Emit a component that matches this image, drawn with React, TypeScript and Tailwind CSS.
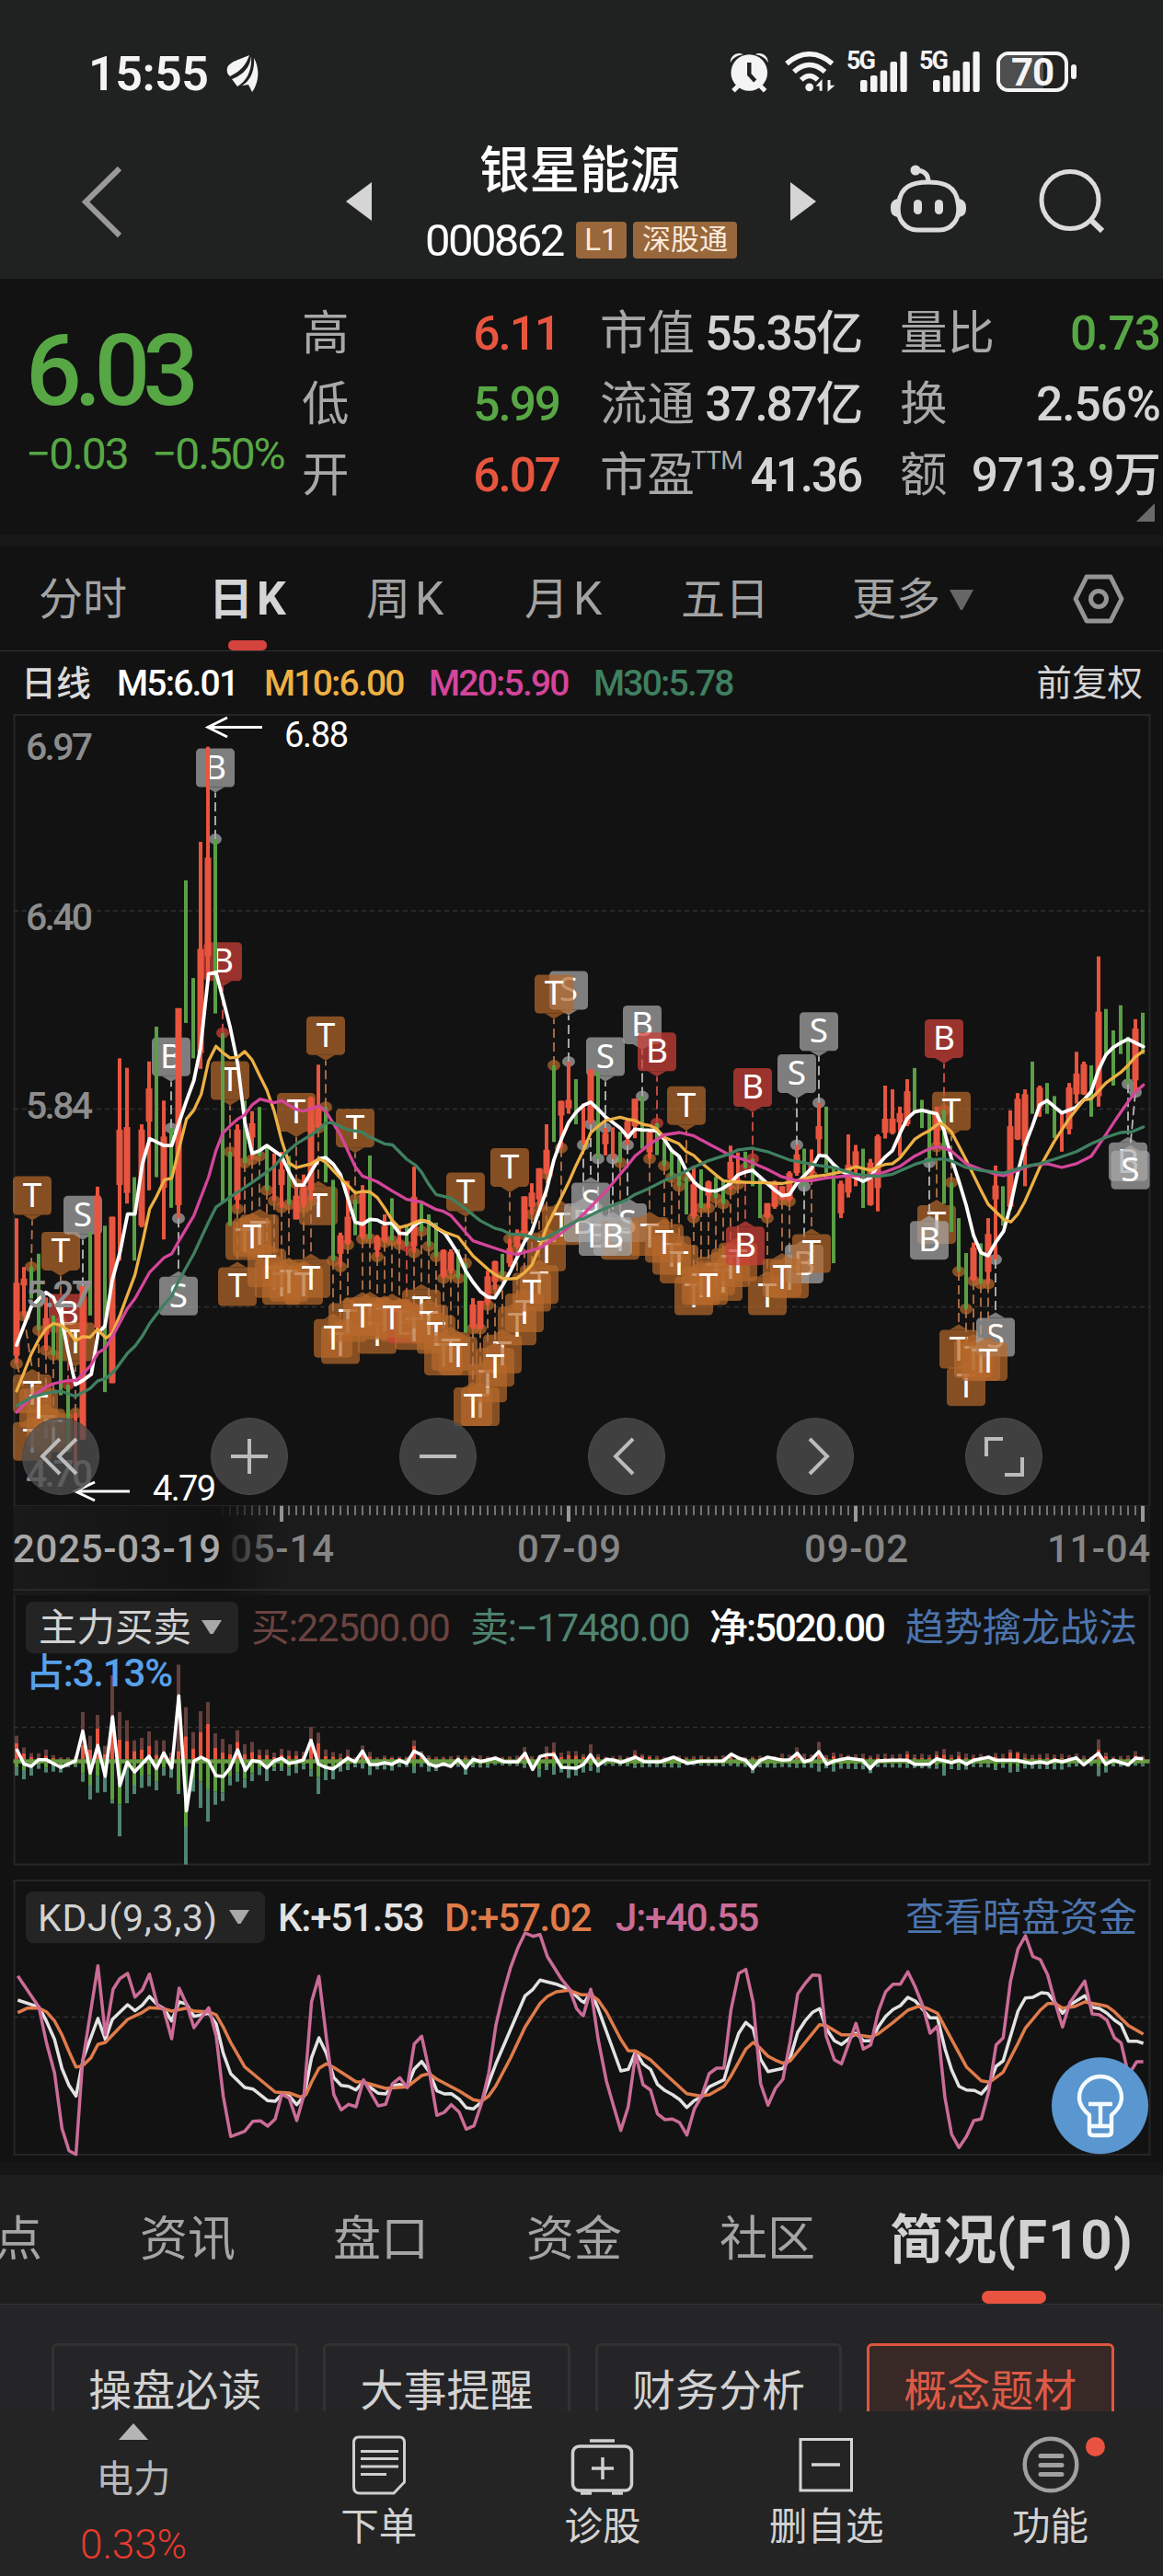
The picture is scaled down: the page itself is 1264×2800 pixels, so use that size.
import React from "react";

/* ---------- chart data ---------- */

type Section = { x0: number; sx: number; y0: number; sy: number };

const LEFT: Section = { x0: 0, sx: 3, y0: 760, sy: 1.742 };
const MID: Section = { x0: 400, sx: 3, y0: 1020, sy: 2.45 };
const RIGHT: Section = { x0: 820, sx: 3, y0: 1020, sy: 2.45 };
const FLOW_A: Section = { x0: 0, sx: 3, y0: 1720, sy: 3 };
const FLOW_B: Section = { x0: 0, sx: 1.2405, y0: 1620, sy: 3 };
const KDJ_A: Section = { x0: 0, sx: 2.481, y0: 2030, sy: 3 };
const KDJ_B: Section = { x0: 632, sx: 2.481, y0: 2030, sy: 3 };

function points(parts: [Section, string][]): string {
  return parts
    .map(([s, str]) =>
      str
        .trim()
        .split(/\s+/)
        .map((p) => {
          const [x, y] = p.split(",").map(Number);
          return `${(s.x0 + x / s.sx).toFixed(1)},${(s.y0 + y / s.sy).toFixed(1)}`;
        })
        .join(" ")
    )
    .join(" ");
}

const xAt = (i: number) => 18 + 8 * i;

/* kind high low [bodyTop bodyBottom] */
const CANDLES_LEFT = `r 983 1258 1105 1243;r 1075 1168 1097 1110;g 1075 1135;g 1050 1195;r 1133 1233 1172 1203;g 1167 1242;g 1180 1318;g 1298 1425;r 1352 1460;r 1112 1402 1112 1402;g 1010 1167;r 923 1193 940 1190;g 997 1312;r 980 1295 980 1295;r 680 1063 815 920;r 698 955 810 935;g 905 1063;r 805 1000 815 997;r 686 930 737 800;g 620 905;r 760 1023 828 925;g 812 963;r 585 983 585 958;g 343 613;g 528 680;r 270 700 473 670;r 90 525 300 487;g 265 595;g 632 953;g 857 997;r 805 965 815 948;g 760 878;r 780 872 803 830;g 772 865;g 850 930;r 860 950;r 857 963 890 920;g 865 957;r 917 985 940 985;r 900 963 920 955;r 752 950 755 930;r 692 812 770 810;g 772 915;g 910 1063;r 1010 1075 1015 1050;r 912 1033 980 1030;g 947 1015;r 920 1022 935 1018`;
const CANDLES_MID = `g 578 800;r 790 848 795 830;r 735 810 765 805;g 692 805;r 765 815;g 765 820;r 608 837 688 820;g 700 780;g 735 820;g 757 848;r 828 905 830 900;r 828 893 835 885;g 828 905;g 865 1050;r 958 1040 975 1035;r 965 1040 965 1040;r 885 977 900 970;r 858 935 860 915;g 840 900;r 800 875 825 865;r 775 825 793 820;r 687 790 687 785;r 652 735 677 715;r 612 715 612 695;r 495 628 563 625;g 338 542;r 432 558 433 472;r 328 467 430 452;g 375 495;r 440 550;r 347 495 350 490;g 355 587;r 505 578 520 548;r 503 587;g 515 597;r 483 550 487 530;r 427 532 427 500;g 420 560;r 512 587 517 570;g 492 577;g 540 605;g 560 637;g 580 660;g 635 735;r 605 745 655 740;g 615 718;r 645 718 648 685;g 635 692;g 645 707;r 552 670 595 640;r 570 655;g 568 612;g 587 660`;
const CANDLES_RIGHT = `g 640 745;r 705 745 705 742;r 645 720 650 715;r 660 697 660 695;r 620 700 625 695;r 550 632 575 625;g 560 660;r 562 632 597 625;r 438 577 500 535;g 448 625;g 600 865;r 645 745 653 732;r 522 690 603 677;r 550 660 567 610;g 560 718;r 587 712 597 710;r 522 727 527 665;r 392 533 480 518;r 402 522 480 518;r 448 580 465 490;r 375 500 407 495;g 345 460;g 430 505;g 465 597;r 448 555 467 550;g 457 707;g 650 782;g 745 887;g 838 987;r 810 912 823 910;g 812 920;r 745 920 787 888;r 605 855 658 695;g 660 765;r 458 722 500 715;r 412 537 427 535;r 402 660 415 553;g 328 467;r 392 475 397 450;g 385 467;g 420 532;r 465 568;r 385 522 397 508;r 302 440 360 415;r 328 417 335 415;g 338 475;r 48 448 195 420;g 188 312;g 245 392;g 178 308;g 262 388;r 215 410 240 378;g 198 308`;

type Candle = { i: number; up: boolean; high: number; low: number; top?: number; bottom?: number };

function parseCandles(src: string, start: number, s: Section): Candle[] {
  return src.split(";").map((row, k) => {
    const f = row.split(" ");
    const v = f.slice(1).map((n) => s.y0 + Number(n) / s.sy);
    return { i: start + k, up: f[0] === "r", high: v[0], low: v[1], top: v[2], bottom: v[3] };
  });
}

const CANDLES = [
  ...parseCandles(CANDLES_LEFT, 0, LEFT),
  ...parseCandles(CANDLES_MID, 48, MID),
  ...parseCandles(CANDLES_RIGHT, 101, RIGHT),
];

const MA5 = points([
  [LEFT, "54,1223 102,1150 150,1123 174,1133 198,1165 222,1235 246,1298 270,1290 298,1278 320,1200 342,1187 366,1100 392,1045 416,975 440,975 464,880 488,832 510,838 534,845 560,845 582,805 608,760 632,722 654,660 680,520 704,517 728,570 750,620 775,690 798,800 822,860 846,855 870,845 918,865 942,895 966,920 990,920 1014,895 1040,870 1062,868 1086,880 1110,900 1134,945 1158,990 1182,994"],
  [MID, "6,748 30,750 54,760 78,758 102,785 126,787 150,765 174,752 198,755 222,770 250,785 272,812 294,840 318,885 342,915 366,940 390,955 414,957 438,925 462,890 486,850 510,808 534,780 558,725 582,670 606,590 630,535 654,490 678,463 702,445 726,436 750,455 774,475 798,490 822,505 848,530 870,508 894,510 942,512 966,535 990,565 1014,580 1038,620 1062,648 1086,665 1110,672 1134,673 1158,665 1182,652 1206,630 1230,622 1254,618"],
  [RIGHT, "18,635 42,653 66,670 90,685 114,682 138,652 162,632 186,612 210,578 234,580 258,602 282,620 330,637 354,647 378,637 402,605 426,582 450,565 474,520 498,480 522,462 546,458 594,467 618,510 642,585 666,645 690,710 714,790 738,837 762,845 786,810 812,780 834,715 858,625 882,550 906,500 930,443 954,432 1002,465 1026,457 1048,450 1074,430 1098,408 1122,350 1146,310 1170,290 1194,278 1218,268 1242,278 1268,288"],
]);
const MA10 = points([
  [LEFT, "54,1310 102,1240 126,1213 150,1192 174,1182 198,1185 222,1195 246,1215 270,1207 294,1208 318,1193 346,1210 366,1200 392,1165 416,1127 440,1090 464,1030 488,965 510,942 536,910 560,907 584,850 608,795 632,778 656,748 680,685 704,657 728,670 750,679 775,678 798,667 822,683 846,712 870,740 894,780 918,835 942,878 966,887 1014,880 1040,870 1062,877 1086,892 1110,907 1134,920 1158,935 1182,932"],
  [MID, "6,675 30,690 54,718 78,750 102,770 126,765 174,750 198,755 222,770 250,782 294,795 318,820 342,845 390,880 414,895 438,905 462,907 486,905 510,890 534,870 558,825 582,770 606,730 654,650 678,605 702,565 726,518 750,500 774,485 822,476 846,482 870,485 894,495 918,498 942,508 966,530 1014,547 1038,568 1062,578 1086,597 1110,613 1134,630 1158,645 1182,648 1254,650"],
  [RIGHT, "18,650 90,653 138,645 186,635 234,630 282,622 330,608 380,618 402,608 426,602 450,600 474,585 522,535 546,522 570,512 602,492 618,497 642,515 690,590 738,670 762,708 812,748 836,755 858,735 882,700 930,610 978,540 1026,480 1074,430 1098,427 1146,385 1194,357 1218,338 1242,315 1268,300"],
]);
const MA20 = points([
  [LEFT, "54,1350 102,1322 150,1302 174,1296 222,1290 250,1290 270,1277 294,1263 320,1237 342,1230 366,1207 416,1153 440,1135 488,1085 534,1058 560,1050 584,1025 632,978 680,905 704,855 726,822 750,808 775,795 798,787 822,768 848,757 894,764 918,760 966,777 990,780 1040,770 1062,780 1110,825 1158,885 1182,903"],
  [MID, "6,640 30,648 78,672 126,695 174,702 222,722 246,727 270,738 342,805 366,812 414,825 462,838 486,842 558,825 606,800 666,762 702,735 750,695 774,675 846,605 870,580 918,548 966,523 1016,517 1060,525 1110,547 1182,578 1254,597"],
  [RIGHT, "0,600 42,615 90,635 138,645 186,645 234,638 306,632 378,632 426,622 474,607 522,580 570,560 602,555 640,565 690,600 738,615 786,628 812,632 850,620 900,605 954,600 1002,610 1050,600 1098,580 1146,522 1170,492 1194,463 1218,435 1242,410 1268,390"],
]);
const MA30 = points([
  [LEFT, "54,1338 102,1322 150,1314 198,1310 246,1320 294,1305 318,1291 346,1286 376,1270 416,1238 440,1225 464,1206 488,1182 534,1147 560,1130 584,1100 632,1050 680,990 704,962 750,943 822,915 894,885 930,860 966,842 1014,825 1040,815 1062,802 1086,802 1134,815 1182,820"],
  [MID, "0,527 54,547 80,550 126,588 156,605 174,622 198,655 222,682 270,692 318,720 366,752 414,772 438,777 462,787 510,790 560,802 582,797 630,775 690,748 702,747 750,727 846,695 870,682 918,665 966,645 1016,628 1060,610 1110,592 1182,573 1206,563 1254,558"],
  [RIGHT, "0,560 42,568 114,590 210,605 258,610 330,628 402,634 450,628 522,602 570,590 618,587 650,595 690,610 738,618 812,625 880,608 930,600 978,588 1050,568 1098,547 1146,530 1194,517 1230,515 1268,502"],
]);

/* ---------- trade markers ---------- */

type Marker = { i: number; letter: "T" | "B" | "S"; tone: "t" | "r" | "g"; above: boolean };

const mk = (letter: Marker["letter"], tone: Marker["tone"], above: boolean, list: number[]): Marker[] =>
  list.map((i) => ({ i, letter, tone, above }));

const FRONT = [3, 32, 34, 40, 43, 47, 51, 60, 62, 65, 69, 70, 73, 81, 88, 94, 99, 102, 104, 108, 124, 132, 152];

const MARKERS: Marker[] = [
  ...mk("T", "t", true, [2, 6, 8, 29, 38, 42, 46, 61, 67, 73, 91, 127]),
  ...mk("T", "t", false, [
    0, 1, 3, 4, 5, 30, 31, 32, 33, 34, 35, 36, 37, 39, 40, 41, 43, 44, 45, 47, 48, 49, 50, 51, 52, 54, 55, 56, 57, 58, 59,
    60, 62, 63, 64, 65, 66, 68, 69, 70, 71, 72, 74, 82, 86, 88, 89, 90, 92, 93, 94, 95, 96, 97, 98, 102, 104, 105, 108, 125,
    128, 129, 130, 131, 132,
  ]),
  ...mk("B", "r", true, [7, 28, 87, 100, 126]),
  ...mk("B", "r", false, [53, 99]),
  ...mk("B", "g", true, [21, 27, 85]),
  ...mk("B", "g", false, [77, 79, 81, 107, 124, 151]),
  ...mk("S", "g", true, [9, 75, 80, 106, 109]),
  ...mk("S", "g", false, [22, 78, 83, 133, 152]),
].sort((a, b) => Number(FRONT.includes(a.i)) - Number(FRONT.includes(b.i)) || a.i - b.i);

const TONES = {
  t: { fill: "#b7692b", dash: "#b5734a", op: 0.7 },
  r: { fill: "#c83f37", dash: "#d0504a", op: 0.75 },
  g: { fill: "#a8a8a8", dash: "#b8b8b8", op: 0.72 },
};

function MarkerTag({ m }: { m: Marker }) {
  const c = CANDLES[m.i];
  const x = xAt(m.i);
  const tx = Math.max(35, Math.min(x, m.i === 152 ? 1228.5 : 1226));
  const y = m.above ? c.high : c.low;
  const top = m.above ? y - 98.5 : y + 63.5;
  const t = TONES[m.tone];
  const tip = m.above ? top + 48 : top - 6;
  const edge = m.above ? top + 42 : top;
  return (
    <g>
      <line x1={x} y1={y} x2={tx} y2={tip} stroke={t.dash} strokeWidth="1.8" strokeDasharray="10 5" />
      <ellipse cx={x} cy={y} rx="7" ry="6" fill={t.fill} opacity={t.op} />
      <g opacity={t.op}>
        <rect x={tx - 21} y={top} width="42" height="42" rx="4.5" fill={t.fill} />
        <path d={`M${tx - 10} ${edge}L${tx} ${tip}L${tx + 10} ${edge}Z`} fill={t.fill} />
      </g>
      <text x={tx} y={top + 33} fontSize="37" fill="#fff" textAnchor="middle" fontFamily='"Noto Sans", sans-serif'>
        {m.letter}
      </text>
    </g>
  );
}

/* ---------- fund flow data: outer top, inner top, inner bottom, outer bottom ---------- */

const FLOW_HEAD = `500 525 605 630;538 558 612 642;557 570 605 630;557 572 595 608;545 565 605 620;563 572 600 617;570 575 603 620;570 575 595 603;568 574 595 602;423 530 622 650;500 545 660 708;432 477 632 686;533 560 632 684;303 440 710 721;422 513 725 828;450 517 608 720;515 550 660 690;507 545 630 670;486 533 628 665;515 562 650 678;515 560 605 630;555 570 605 637;268 550 678 690;407 502 795 920;488 542 640 682;420 488 650 735;390 462 672 780;492 540 682 725;510 555 685 713;528 560 635 662;482 520 620 650;528 560 640 670;520 553 622 648;545 563 605 628;545 563 610 648;555 570 605 615;543 562 600 615;548 565 605 630;550 565 600 622;552 568 595 610;471 510 610 633;490 525 635 690;545 567 610 645;553 568 605 642;558 572 600 617;545 565 595 612;570 575 593 603;532 548 590 607;553 568 600 628;570 575 598 610;565 573 595 610;568 573 600 614;568 573 592 602;568 573 590 602;515 533 600 622;550 568 590 602;565 573 600 617;568 574 600 615`;

const FLOW_PEAKS: Record<number, number[]> = {
  61: [566, 573, 605, 627], 69: [537, 558, 595, 605], 71: [565, 572, 610, 635], 72: [535, 560, 600, 612], 73: [522, 552, 600, 627],
  74: [555, 570, 600, 620], 75: [550, 563, 610, 638], 76: [550, 565, 605, 630], 77: [560, 570, 600, 620], 78: [528, 560, 598, 615],
  79: [560, 570, 600, 620], 84: [547, 560, 595, 605], 85: [560, 567, 595, 603], 86: [564, 570, 590, 602], 97: [560, 568, 590, 598],
  100: [568, 573, 605, 622], 106: [538, 558, 595, 605], 109: [520, 553, 595, 617], 111: [555, 567, 598, 617], 116: [565, 572, 605, 622],
  121: [550, 560, 595, 605], 125: [550, 562, 598, 608], 126: [543, 562, 600, 630], 128: [552, 565, 600, 612], 133: [556, 568, 600, 612],
  135: [545, 555, 600, 620], 136: [552, 556, 600, 618], 144: [558, 570, 590, 600], 147: [512, 545, 600, 632], 148: [555, 567, 602, 620],
  152: [550, 565, 590, 598], 153: [565, 572, 592, 600],
};

const FLOW_BARS: number[][] = [
  ...FLOW_HEAD.split(";").map((r) => r.split(" ").map(Number)),
  ...Array.from({ length: 96 }, (_, k) => {
    const i = k + 58;
    if (FLOW_PEAKS[i]) return FLOW_PEAKS[i];
    const active = i > 103 && i < 145 ? 6 : 0;
    const a = (i * 37) % 11;
    const b = (i * 53) % 13;
    return [569 - a * 0.5 - active, 574 - active / 3, 592 + b * 0.3, 596 + b * 0.7 + active];
  }),
];

const FLOW_NET = points([
  [FLOW_A, "54,543 78,592 102,600 126,578 150,578 198,603 246,582 270,485 294,622 319,532 343,632 367,438 391,662 415,586 439,618 486,567 510,607 534,556 560,605 583,370 608,745 632,582 656,570 680,583 704,630 728,633 750,605 775,546 800,613 822,581 846,584 870,605 894,582 918,573 942,590 966,586 990,578 1014,515 1038,592 1062,603 1086,608 1134,573 1158,585 1182,550 1206,594 1230,594 1254,588 1278,593 1302,580 1326,590 1350,550 1374,562 1398,592 1422,600 1446,592 1470,600 1494,577"],
  [FLOW_B, "628,905 638,877 648,884 668,873 680,885 698,885 708,857 718,910 728,868 738,862 747,862 757,903 777,906 787,893 796,862 806,897 818,877 828,880 837,887 857,870 868,884 890,885 908,870 927,890 945,883 975,882 986,860 995,872 1005,880 1015,907 1025,880 1035,870 1055,880 1065,878 1075,857 1084,885 1094,878 1104,852 1115,893 1125,882 1143,873 1163,880 1173,907 1183,882 1203,880 1223,880 1233,893 1253,893 1263,875 1283,888 1293,880 1303,893 1313,880 1333,870 1343,880 1370,880 1390,890 1402,885 1412,890 1422,880 1432,885 1451,872 1461,895 1481,857 1491,893 1501,880 1521,895 1531,873 1541,875"],
]);

/* ---------- KDJ data ---------- */

const J_LINE = points([
  [KDJ_A, "48,353 105,455 125,570 147,670 167,850 186,923 205,935 222,640 264,320 284,545 305,397 323,362 344,345 364,422 384,398 403,347 424,447 442,465 463,558 483,393 503,445 523,522 563,457 583,550 602,745 622,877 660,860 682,827 702,826 722,843 742,820 760,738 780,752 800,825 820,740 840,437 860,355 880,555 900,740 920,790 940,772 960,780 980,692 1000,735 1020,777 1040,772 1058,705 1078,685 1098,718 1117,575 1137,550 1157,660 1178,808 1198,798 1217,773 1238,797 1257,853 1278,842 1298,770 1318,670 1337,515 1357,410 1377,325 1397,260 1416,213 1437,224 1456,218 1476,290 1515,365 1535,395 1555,460"],
  [KDJ_B, "0,478 5,483 25,397 45,560 67,695 87,780 106,857 126,780 146,608 166,708 186,725 205,803 225,822 245,820 265,832 284,872 304,788 324,745 344,672 364,654 384,654 403,465 424,345 443,332 463,440 483,705 503,775 523,720 543,690 563,565 583,412 603,378 623,350 642,352 660,550 682,627 701,640 740,508 760,592 780,578 800,470 820,405 840,380 860,380 880,340 900,390 920,450 940,540 960,517 980,750 998,870 1018,913 1038,877 1058,825 1078,820 1098,730 1118,578 1137,555 1157,370 1177,265 1197,222 1217,290 1237,300 1257,350 1277,440 1297,520 1317,440 1357,370 1377,477 1397,480 1417,498 1437,555 1455,572 1475,677 1497,633 1515,633"],
]);
const K_LINE = points([
  [KDJ_A, "48,432 105,455 125,500 147,560 167,655 186,710 205,745 225,620 264,492 284,560 303,495 344,447 364,467 384,448 403,420 424,447 442,460 463,500 483,438 503,445 523,485 563,475 583,510 602,605 622,672 660,717 682,722 722,760 742,762 760,740 780,745 800,773 820,745 840,620 860,555 880,605 900,685 920,710 940,713 960,725 980,697 1000,718 1020,736 1040,738 1058,712 1078,707 1098,715 1117,657 1137,632 1157,665 1178,728 1198,738 1217,737 1238,755 1257,783 1276,787 1298,765 1337,640 1416,418 1437,397 1456,367 1500,380 1535,397"],
  [KDJ_B, "0,435 8,440 25,405 45,460 106,663 126,658 146,600 166,640 186,658 205,707 225,727 245,740 265,757 284,782 304,760 324,748 344,715 384,692 403,615 424,540 443,505 463,525 483,625 503,665 543,655 563,620 583,537 603,500 623,472 642,460 660,525 682,565 701,577 740,540 760,565 780,565 800,520 820,485 840,463 860,450 880,423 900,435 940,490 960,490 980,590 998,660 1018,713 1038,725 1060,727 1078,738 1098,710 1118,648 1137,630 1177,468 1197,425 1217,423 1240,408 1257,410 1277,440 1297,475 1317,448 1357,418 1377,455 1397,460 1417,475 1437,497 1455,512 1475,566 1497,566 1515,573"],
]);
const D_LINE = points([
  [KDJ_A, "48,473 75,458 105,458 125,470 147,500 167,545 186,600 205,650 222,647 245,620 264,577 284,570 344,495 384,472 403,457 442,460 463,468 503,458 523,468 563,470 583,480 602,520 622,570 660,650 700,690 742,732 780,735 810,748 825,740 840,700 860,655 880,640 900,652 960,698 980,700 1040,720 1098,715 1137,678 1157,672 1178,690 1238,728 1276,757 1298,762 1318,745 1337,712 1377,620 1416,520 1456,443 1476,420 1500,405 1535,400"],
  [KDJ_B, "0,415 25,415 45,432 67,470 106,560 126,597 146,598 186,627 225,672 284,737 320,745 345,740 384,713 403,680 443,592 463,570 483,590 503,615 523,628 543,638 563,630 600,575 642,512 660,515 701,545 740,545 780,552 800,542 840,505 880,465 910,452 930,458 960,475 980,520 1038,650 1078,695 1100,700 1137,667 1177,573 1197,523 1237,465 1257,443 1277,443 1297,458 1330,453 1357,438 1397,447 1417,452 1437,470 1475,515 1515,543"],
]);

/* ---------- header ---------- */

function Signal() {
  return (
    <div className="relative h-[44px] w-[66px]">
      <span className="absolute left-0 top-0 text-[27px] font-bold leading-[21px] tracking-[-2px]">5G</span>
      <svg className="absolute inset-0" width="66" height="44" fill="#f4f4f4">
        <rect x="15" y="31" width="7.5" height="13" rx="2" />
        <rect x="26" y="26" width="7.5" height="18" rx="2" />
        <rect x="36.7" y="20.5" width="7.5" height="23.5" rx="2" />
        <rect x="47.5" y="11" width="7.5" height="33" rx="2" />
        <rect x="58.5" y="0" width="7.2" height="44" rx="2" />
      </svg>
    </div>
  );
}

function StatusBar() {
  return (
    <div className="flex h-[157px] items-start pl-[96px] pt-[56px] text-[#f4f4f4]">
      <div className="w-[150px] text-[52px] font-semibold leading-[50px] tracking-[-0.5px]">15:55</div>
      <svg className="mt-[3px]" width="36" height="42" viewBox="0 0 36 42" fill="#f4f4f4">
        <path d="M25 1C15 5 2 9 1 15C0 20 2 22 4 24C12 20 21 14 25 1Z" />
        <path d="M27 2C26 15 17 23 6 27L12 35C23 28 28 17 27 2Z" />
        <path d="M30 4C31 18 26 29 17 34L24 33L28 41C35 32 37 16 30 4Z" />
      </svg>
      <div className="ml-[511px] flex h-[44px] w-[377px] items-start">
        <svg width="44" height="45" viewBox="0 0 44 45">
          <circle cx="21.5" cy="23" r="20" fill="#f4f4f4" />
          <path d="M9 38L4 43M34 38L39 43" stroke="#f4f4f4" strokeWidth="5" />
          <path d="M1 12C0 5 8 -1 15 3C8 4 3 7 1 12ZM42 12C43 5 35 -1 28 3C35 4 40 7 42 12Z" fill="#f4f4f4" />
          <path d="M21.5 12V25L28 32" fill="none" stroke="#202221" strokeWidth="4.5" />
        </svg>
        <svg className="ml-[16px]" width="56" height="45" viewBox="0 0 56 45">
          <path d="M2 13C18 -1 36 -1 52 13M10 22C21 12 33 12 44 22M18 31C24 25 30 25 36 31" fill="none" stroke="#f4f4f4" strokeWidth="5.5" />
          <circle cx="27" cy="39" r="4.5" fill="#f4f4f4" />
          <path d="M34 38L41 30V43H38V38ZM55 37L47 44V31H50V37Z" fill="#f4f4f4" />
        </svg>
        <div className="ml-[12px]"><Signal /></div>
        <div className="ml-[13px]"><Signal /></div>
        <div className="ml-[18px] flex items-center">
          <div className="relative h-[44px] w-[78px] rounded-[13px] border-4 border-[#f4f4f4]">
            <div className="absolute inset-y-0 left-0 w-[47px] rounded-l-[9px] bg-[#4d4e4d]" />
            <div className="relative text-center text-[42px] font-bold leading-[38px] tracking-[-1px]">70</div>
          </div>
          <div className="ml-[3px] h-[16px] w-[6px] rounded-[3px] bg-[#f4f4f4]" />
        </div>
      </div>
    </div>
  );
}

function TitleBar() {
  return (
    <div className="flex h-[146px] items-start">
      <svg className="ml-[88px] mt-[24px]" width="46" height="78" fill="none" stroke="#999" strokeWidth="6">
        <path d="M42 2L5 38.5L42 75" />
      </svg>
      <svg className="ml-[242px] mt-[41px]" width="29" height="42" fill="#d5d5d5"><path d="M28 0V42L0 21Z" /></svg>
      <div className="ml-[57px] flex w-[340px] flex-col">
        <div className="ml-[59px] mt-[-2px] whitespace-nowrap text-[54.5px] font-medium leading-[60px] text-white">银星能源</div>
        <div className="mt-[25px] flex h-[42px] items-center">
          <span className="mt-[2px] w-[164px] text-[49px] leading-[42px] tracking-[-2.6px] text-white">000862</span>
          <span className="flex h-[40px] w-[55px] items-center justify-center rounded-[4px] bg-[#99673c] text-[33px] text-[#fbead8]">L1</span>
          <span className="ml-[7px] flex h-[40px] w-[113px] items-center justify-center rounded-[4px] bg-[#99673c] text-[31px] leading-[36px] text-[#fbead8]">
            深股通
          </span>
        </div>
      </div>
      <svg className="ml-[57px] mt-[41px]" width="29" height="42" fill="#d5d5d5"><path d="M0 0V42L28 21Z" /></svg>
      <svg className="ml-[79px] mt-[22px]" width="84" height="76" viewBox="0 0 84 76" fill="none" stroke="#dcdcdc" strokeWidth="5">
        <path d="M42 19C60 19 72 24 74 41C78 60 66 71 54 71H30C18 71 6 60 10 41C12 24 24 19 42 19Z" />
        <path d="M42 19C42 10 37 6 28 6" />
        <circle cx="28" cy="6" r="5.5" fill="#dcdcdc" stroke="none" />
        <path d="M8 37C3 39 1 41 1 47C1 53 3 56 9 57ZM76 37C81 39 83 41 83 47C83 53 81 56 75 57Z" fill="#dcdcdc" stroke="none" />
        <rect x="26" y="38" width="9" height="16" rx="4.5" fill="#dcdcdc" stroke="none" />
        <rect x="49" y="38" width="9" height="16" rx="4.5" fill="#dcdcdc" stroke="none" />
      </svg>
      <svg className="ml-[78px] mt-[27px]" width="74" height="72" fill="none" stroke="#dcdcdc" strokeWidth="5">
        <circle cx="34" cy="33.5" r="31" />
        <path d="M56 54.5L69 67" strokeWidth="6" />
      </svg>
    </div>
  );
}

/* ---------- quote summary ---------- */

const RED = "text-[#e8553f]";
const GREEN = "text-[#57a745]";
const PALE = "text-[#d5d5d5]";

const QUOTE_ROWS = [
  { a: "高", av: "6.11", ac: RED, b: "市值", bv: "55.35亿", c: "量比", cv: "0.73", cc: GREEN },
  { a: "低", av: "5.99", ac: GREEN, b: "流通", bv: "37.87亿", c: "换", cv: "2.56%", cc: PALE },
  { a: "开", av: "6.07", ac: RED, b: "市盈", ttm: true, bv: "41.36", c: "额", cv: "9713.9万", cc: PALE },
];

function Quote() {
  return (
    <section className="flex h-[278px] bg-[#121212]">
      <div className="w-[328px] shrink-0 pl-[28px]">
        <div className={`mt-[53px] h-[96px] text-[107px] font-medium leading-[96px] tracking-[-8px] ${GREEN}`}>6.03</div>
        <div className={`mt-[17px] flex h-[50px] items-center whitespace-nowrap text-[48px] tracking-[-2.1px] ${GREEN}`}>
          <span className="w-[137px]">−0.03</span>
          <span>−0.50%</span>
        </div>
      </div>
      <div className="relative mt-[21px] flex w-[936px] flex-col text-[51.5px]">
        {QUOTE_ROWS.map((r) => (
          <div key={r.a} className="flex h-[77px] items-center whitespace-nowrap">
            <span className="w-[100px] text-[#a8a8a8]">{r.a}</span>
            <span className={`w-[180px] text-right font-medium tracking-[-2.1px] ${r.ac}`}>{r.av}</span>
            <span className="ml-[44px] flex w-[90px] text-[#a8a8a8]">
              {r.b}
              {r.ttm && <sup className="top-0 ml-[-4px] mt-[8px] text-[28px] leading-[30px] tracking-[-0.7px]">TTM</sup>}
            </span>
            <span className={`w-[194px] text-right font-medium tracking-[-2.2px] ${PALE}`}>{r.bv}</span>
            <span className="ml-[42px] w-[110px] text-[#a8a8a8]">{r.c}</span>
            <span className={`w-[173px] text-right font-medium tracking-[-1px] ${r.cc}`}>
              <span className="float-right">{r.cv}</span>
            </span>
          </div>
        ))}
        <svg className="absolute bottom-[14px] right-[9px]" width="20" height="20" fill="#6a6a6a"><path d="M20 0V20H0Z" /></svg>
      </div>
    </section>
  );
}

/* ---------- period tabs ---------- */

function PeriodTabs() {
  const cell = "flex h-full items-center whitespace-nowrap pt-[2px]";
  return (
    <nav className="relative flex h-[114px] items-center border-b border-[#303030] bg-[#121212] pl-[42px] text-[48px] text-[#a3a3a3]">
      <div className={`${cell} w-[185px]`}>分时</div>
      <div className={`${cell} relative w-[171px] gap-[4px] font-bold text-[#d5d5d5]`}>
        日<span className="text-[50px]">K</span>
        <span className="absolute bottom-0 left-[21px] h-[11px] w-[42px] rounded-[5px] bg-[#d5443c]" />
      </div>
      <div className={`${cell} w-[172px] gap-[5px]`}>周<span className="text-[50px]">K</span></div>
      <div className={`${cell} w-[170px] gap-[5px]`}>月<span className="text-[50px]">K</span></div>
      <div className={`${cell} w-[186px]`}>五日</div>
      <div className={`${cell} w-[240px]`}>
        更多
        <svg className="ml-[9px]" width="28" height="22" fill="#666"><path d="M1 0H27L15 22H13Z" /></svg>
      </div>
      <svg width="56" height="54" fill="none" stroke="#959595" strokeWidth="5" strokeLinejoin="round">
        <path d="M15 3H41L53 27L41 51H15L3 27Z" />
        <circle cx="28" cy="27" r="8.5" />
      </svg>
    </nav>
  );
}

function MaLegend() {
  return (
    <div className="flex h-[68px] items-center whitespace-nowrap bg-[#121212] pl-[23px] pr-[22px] pt-[2px] text-[39px] font-medium tracking-[-1.8px]">
      <span className="w-[104px] text-[38px] tracking-normal text-[#dadada]">日线</span>
      <span className="w-[160px] text-white">M5:6.01</span>
      <span className="w-[179px] text-[#eeb044]">M10:6.00</span>
      <span className="w-[179px] text-[#d4459a]">M20:5.90</span>
      <span className="text-[#3f8060]">M30:5.78</span>
      <span className="ml-auto text-[38.5px] font-normal tracking-normal text-[#d5d5d5]">前复权</span>
    </div>
  );
}

/* ---------- main chart ---------- */

const UP = "#e8553f";
const DOWN = "#5a9f45";
const NUM = 'Roboto, "Noto Sans CJK SC", sans-serif';

const GRID_LABELS: [string, number][] = [["6.97", 826], ["6.40", 1011], ["5.84", 1216], ["5.27", 1421], ["4.70", 1616]];

function CircleButton({ x, children }: { x: number; children: React.ReactNode }) {
  return (
    <g transform={`translate(${x} 1583)`} fill="none" stroke="#bcbcbc" strokeWidth="4">
      <circle r="41.5" fill="#4e4e4e" fillOpacity=".77" stroke="#4b4b4b" strokeWidth="1" />
      {children}
    </g>
  );
}

function PriceChart() {
  return (
    <svg className="block overflow-visible" width="1264" height="860" viewBox="0 776 1264 860">
      <path d="M15.5 1636V777H1249.5V1636" fill="none" stroke="#262626" strokeWidth="2" />
      <path d="M15 990H1250M15 1205.5H1250M15 1420.5H1250" stroke="#303030" strokeWidth="1.5" strokeDasharray="5 4" />
      {MARKERS.map((m) => <MarkerTag key={`${m.i}${m.letter}`} m={m} />)}
      {CANDLES.map((c) => (
        <g key={c.i} fill={c.up ? UP : DOWN}>
          <rect x={xAt(c.i) - 2} y={c.high} width="4" height={c.low - c.high} />
          {c.up && c.top !== undefined && c.bottom !== undefined && (
            <rect x={xAt(c.i) - 3.5} y={c.top} width="7" height={c.bottom - c.top} />
          )}
        </g>
      ))}
      <g fill="none" strokeLinejoin="round" strokeLinecap="round" strokeWidth="3.3">
        <polyline points={MA5} stroke="#fff" strokeWidth="3.8" />
        <polyline points={MA10} stroke="#eeb044" />
        <polyline points={MA20} stroke="#d4459a" />
        <polyline points={MA30} stroke="#3f8060" />
      </g>
      <g fill="#8d8d8d" fontSize="41" fontWeight="500" fontFamily={NUM}>
        {GRID_LABELS.map(([t, y]) => (
          <text key={t} x="28" y={y} textLength="73">{t}</text>
        ))}
      </g>
      <g fontSize="38" fill="#fff" fontFamily={NUM}>
        <text x="309" y="812" textLength="70">6.88</text>
        <text x="166" y="1631" textLength="69">4.79</text>
      </g>
      <path d="M285 790.5H226M247 780L226 790.5L247 801M141 1621H82M103 1611L82 1621L103 1631" fill="none" stroke="#fff" strokeWidth="3" />
      <CircleButton x={66}><path d="M-1 -19L-20 0L-1 19M17 -19L-2 0L17 19" /></CircleButton>
      <CircleButton x={271}><path d="M-20 0H20M0 -19V19" /></CircleButton>
      <CircleButton x={476}><path d="M-20 0H20" /></CircleButton>
      <CircleButton x={681}><path d="M7 -19L-12 0L7 19" /></CircleButton>
      <CircleButton x={886}><path d="M-6 -19L13 0L-6 19" /></CircleButton>
      <CircleButton x={1091}><path d="M-19 0V-19H-1M20 1V20H1" /></CircleButton>
    </svg>
  );
}

function DateAxis() {
  return (
    <svg className="block" width="1264" height="98" viewBox="0 1636 1264 98" fontFamily={NUM} fontWeight="500">
      <defs>
        <linearGradient id="axisShade" x1="0" x2="1">
          <stop offset="0" stopColor="#1a1a1a" />
          <stop offset=".75" stopColor="#121212" />
          <stop offset="1" stopColor="#121212" stopOpacity="0" />
        </linearGradient>
      </defs>
      <rect x="14.5" y="1636" width="1235.5" height="98" fill="#1b1b1b" />
      {CANDLES.filter((c) => c.i > 27).map((c) => {
        const major = (c.i - 36) % 39 === 0;
        return (
          <rect key={c.i} x={xAt(c.i) - (major ? 2 : 1)} y="1636" width={major ? 4 : 2} height={major ? 18 : 11} fill={major ? "#999" : "#737373"} />
        );
      })}
      <g fill="#868686" fontSize="42">
        <text x="250" y="1698" textLength="113">05-14</text>
        <text x="562" y="1698" textLength="113">07-09</text>
        <text x="874" y="1698" textLength="113">09-02</text>
        <text x="1138" y="1698" textLength="112">11-04</text>
      </g>
      <rect x="14.5" y="1636" width="295" height="98" fill="url(#axisShade)" />
      <text x="14" y="1698" textLength="226" fontSize="42" fill="#a8a8a8">2025-03-19</text>
      <path d="M14.500 1636H1250" stroke="#2a2a2a" strokeWidth="1.5" />
      <path d="M14.500 1728H1250" stroke="#282828" strokeWidth="2" />
    </svg>
  );
}

function Caret() {
  return <svg width="22" height="16" fill="#a8a8a8"><path d="M0 0H22L12.5 15H9.5Z" /></svg>;
}

function FlowPane() {
  return (
    <div className="relative h-[309px] bg-[#121212]">
      <svg className="absolute left-0 top-0" width="1264" height="296" viewBox="0 1734 1264 296">
        <path d="M15.500 1734V2026.500H1249.500V1734" fill="none" stroke="#262626" strokeWidth="2" />
        <path d="M15 1877.500H1250" stroke="#303030" strokeWidth="1.5" strokeDasharray="5 4" />
        {FLOW_BARS.map(([a, b, c, d], i) => {
          const y = (v: number) => 1720 + v / 3;
          const x = xAt(i) - 2;
          return (
            <g key={i}>
              <rect x={x} y={y(a)} width="4" height={(b - a) / 3} fill="#643f3c" />
              <rect x={x} y={y(b)} width="4" height={Math.max(0, (577 - b) / 3)} fill="#e8553f" />
              <rect x={x} y={y(577)} width="4" height={(c - 577) / 3} fill="#5a9f3c" />
              <rect x={x} y={y(c)} width="4" height={(d - c) / 3} fill="#4f8470" />
            </g>
          );
        })}
        <rect x="14.5" y="1912.300" width="1235" height="4.4" fill="#679a41" />
        <polyline points={FLOW_NET} fill="none" stroke="#fff" strokeWidth="3.6" strokeLinejoin="round" />
      </svg>
      <div className="relative flex h-[63px] items-end whitespace-nowrap pl-[28px] text-[42px] leading-[54px] tracking-[-1.3px]">
        <div className="flex h-[56px] w-[231px] items-center rounded-[8px] bg-[#242424] pl-[14px] text-[41.5px] tracking-normal text-[#d2d2d2]">
          <span className="mt-[2px]">主力买卖</span><span className="ml-[11px]"><Caret /></span>
        </div>
        <span className="ml-[14px] w-[238px] text-[#6a4340]">买:22500.00</span>
        <span className="w-[260px] text-[#4f8470]">卖:−17480.00</span>
        <span className="w-[213px] font-medium tracking-[-2px] text-white">净:5020.00</span>
        <span className="tracking-normal text-[#4c74ad]">趋势擒龙战法</span>
      </div>
      <div className="relative mt-[-1px] pl-[28px] text-[42px] font-medium leading-[46px] tracking-[-1.2px] text-[#57a0ea]">占:3.13%</div>
    </div>
  );
}

function KdjPane() {
  return (
    <div className="relative h-[307px] bg-[#121212]">
      <div className="relative flex h-[69px] items-end whitespace-nowrap pl-[28px] text-[42px] leading-[54px] tracking-[-1.2px]">
        <div className="flex h-[56px] w-[260px] items-center rounded-[8px] bg-[#242424] pl-[13px] text-[#d2d2d2]">
          <span className="mt-[2px] w-[208px] text-[41px] tracking-[0.7px]">KDJ(9,3,3)</span>
          <Caret />
        </div>
        <span className="ml-[14px] w-[181px] font-medium text-[#e2e2e2]">K:+51.53</span>
        <span className="w-[186px] font-medium text-[#e07b4a]">D:+57.02</span>
        <span className="font-medium text-[#cb6c97]">J:+40.55</span>
        <span className="ml-auto mr-[28px] tracking-normal text-[#4c74ad]">查看暗盘资金</span>
      </div>
      <svg className="absolute left-0 top-0" width="1264" height="307" viewBox="0 2043 1264 307">
        <rect x="15.5" y="2044" width="1234" height="298" fill="none" stroke="#262626" strokeWidth="2" />
        <path d="M15 2192.500H1250" stroke="#303030" strokeWidth="1.5" strokeDasharray="5 4" />
        <g fill="none" strokeWidth="3.5" strokeLinejoin="round">
          <polyline points={K_LINE} stroke="#e2e2e2" />
          <polyline points={D_LINE} stroke="#e07b4a" />
          <polyline points={J_LINE} stroke="#cb6c97" />
        </g>
        <circle cx="1195.5" cy="2288.7" r="52.5" fill="#5a96cf" />
        <g fill="none" stroke="#f4fbff" strokeWidth="4.4" strokeLinejoin="round">
          <path d="M1184 2311V2299C1178 2294 1173 2288 1173 2280A23 23 0 0 1 1219 2280C1219 2288 1214 2294 1208 2299V2311Z" />
          <path d="M1184 2311V2317Q1184 2321 1188 2321H1204Q1208 2321 1208 2317V2311" />
          <path d="M1183 2287H1209M1196 2287V2311" />
        </g>
      </svg>
    </div>
  );
}

/* ---------- bottom ---------- */

function SectionTabs() {
  return (
    <nav className="relative flex h-[141px] items-center overflow-hidden whitespace-nowrap border-b border-[#323232] bg-[#1e1e1e] pt-[2px] text-[52px] text-[#a5a5a5]">
      <span className="ml-[-6px] w-[158px]">点</span>
      <span className="w-[210px]">资讯</span>
      <span className="w-[210px]">盘口</span>
      <span className="w-[210px]">资金</span>
      <span className="w-[185px]">社区</span>
      <span className="flex items-center text-[58px] font-bold text-[#d2d2d2]">
        简况<span className="text-[60px] tracking-[1px]">(F10)</span>
      </span>
      <span className="absolute bottom-0 left-[1067px] h-[14px] w-[70px] rounded-[7px] bg-[#ea5340]" />
    </nav>
  );
}

function Chips() {
  const items = ["操盘必读", "大事提醒", "财务分析", "概念题材"];
  return (
    <div className="flex h-[116px] gap-[27px] overflow-hidden bg-[#252527] pl-[56px] pt-[42px] text-[47px]">
      {items.map((t, k) => (
        <div
          key={t}
          className={
            k === 3
              ? "flex h-[104px] w-[268.4px] shrink-0 items-center justify-center rounded-[6px] border-[3px] border-[#df5540] bg-[#382826] text-[#dc5a46]"
              : "flex h-[104px] w-[268.4px] shrink-0 items-center justify-center rounded-[6px] border-[3px] border-[#323233] text-[#d2d2d2]"
          }
        >
          {t}
        </div>
      ))}
    </div>
  );
}

function NavItem({ label, children }: { label: string; children: React.ReactNode }) {
  return (
    <div className="flex w-[243.3px] flex-col items-center">
      <div className="mt-[25px] h-[68px]">{children}</div>
      <div className="mt-[8px] text-[41.5px] leading-[50px] text-[#d2d2d2]">{label}</div>
    </div>
  );
}

function BottomNav() {
  return (
    <nav className="flex h-[179px] whitespace-nowrap bg-[#242424]">
      <div className="flex w-[290px] flex-col items-center">
        <svg className="mt-[13px]" width="32" height="18" fill="#b5b5b5"><path d="M16 0L32 18H0Z" /></svg>
        <div className="mt-[18px] text-[40.5px] leading-[50px] text-[#b8b8b8]">电力</div>
        <div className="mt-[21px] text-[44px] font-light leading-[50px] tracking-[-0.1px] text-[#e83a2e]">0.33%</div>
      </div>
      <NavItem label="下单">
        <svg width="60" height="68" fill="none" stroke="#cfcfcf" strokeWidth="3">
          <path d="M8 3H52Q57.5 3 57.5 9V52L46 64H9Q2.5 64 2.5 57V9Q2.500 3 8 3Z" />
          <path d="M10 18.500H51M10 26.500H51M10 35H51M10 43.500H38" />
        </svg>
      </NavItem>
      <NavItem label="诊股">
        <svg width="70" height="68" fill="none" stroke="#cfcfcf" strokeWidth="3.5">
          <rect x="2.5" y="13" width="64" height="48" rx="7" />
          <path d="M21 7H48M35 25V49M23 37H47M11 64H23M45 64H57" />
        </svg>
      </NavItem>
      <NavItem label="删自选">
        <svg width="60" height="68" fill="none" stroke="#d5d5d5" strokeWidth="3">
          <rect x="2" y="5.5" width="55.5" height="55.5" />
          <path d="M14 33H45" strokeWidth="3.5" />
        </svg>
      </NavItem>
      <NavItem label="功能">
        <div className="relative">
          <svg width="62" height="68" fill="none" stroke="#a0a0a0" strokeWidth="5">
            <circle cx="31" cy="33" r="28.3" strokeWidth="4.5" />
            <path d="M20 23.500H43M20 33.500H43M20 43.500H43" strokeLinecap="round" />
          </svg>
          <span className="absolute left-[69px] top-[3px] size-[21px] rounded-full bg-[#ea5340]" />
        </div>
      </NavItem>
    </nav>
  );
}

export default function App() {
  return (
    <main className="h-[2800px] w-[1264px] overflow-hidden bg-[#121212] font-[Roboto,'Noto_Sans_CJK_SC',sans-serif]">
      <header className="h-[303px] bg-[#202221]">
        <StatusBar />
        <TitleBar />
      </header>
      <Quote />
      <div className="h-[13px] bg-[#171717]" />
      <PeriodTabs />
      <MaLegend />
      <PriceChart />
      <DateAxis />
      <FlowPane />
      <KdjPane />
      <div className="h-[14px] bg-[#161616]" />
      <SectionTabs />
      <Chips />
      <BottomNav />
    </main>
  );
}
